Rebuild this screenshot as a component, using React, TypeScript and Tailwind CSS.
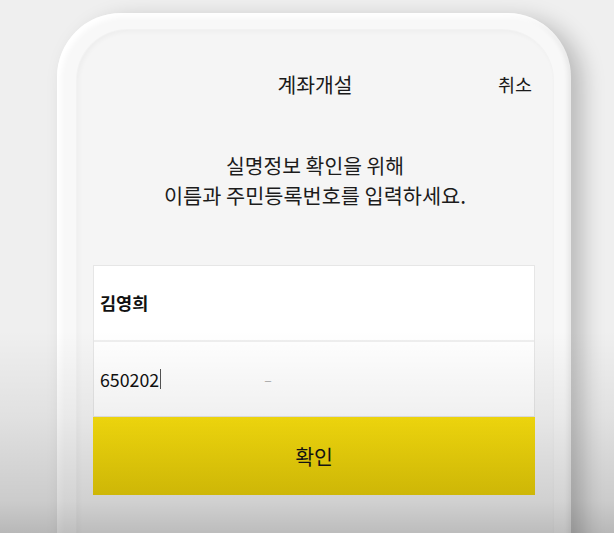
const font = { fontFamily: '"Noto Sans CJK KR", "Noto Sans", sans-serif' };

export default function App() {
  return (
    <div className="relative w-[614px] h-[533px] overflow-hidden bg-[#efefef]" style={font}>
      {/* phone body */}
      <div className="ml-[57px] mt-[13px] w-[514px] h-[600px] rounded-[64px] bg-[#f8f8f8] pt-[17px] pr-[18px] pl-[20px] shadow-[12px_6px_22px_rgba(0,0,0,0.22),inset_4px_4px_5px_rgba(255,255,255,1),inset_-3px_0_5px_rgba(0,0,0,0.07)]">
        {/* screen */}
        <div className="h-full rounded-[50px] bg-[#f5f5f5] shadow-[0_0_0_1px_rgba(0,0,0,0.025),inset_2px_2px_4px_rgba(0,0,0,0.03)]">
          <div className="grid grid-cols-[1fr_auto_1fr] items-center pt-[42px] h-[66px]">
            <div />
            <div className="text-[20.4px] leading-[24px] text-[#1a1a1a]">계좌개설</div>
            <div className="justify-self-end pr-[21px] text-[18.5px] leading-[24px] text-[#1a1a1a]">취소</div>
          </div>

          <div className="mt-[54px] text-center leading-[30px] text-[#1c1c1c]">
            <p className="text-[20.4px]">실명정보 확인을 위해</p>
            <p className="text-[20.8px]">이름과 주민등록번호를 입력하세요.</p>
          </div>

          <div className="mt-[55px] ml-[16px] w-[442px]">
            <div className="border border-[#e6e6e6] bg-white">
              <div className="h-[76px] flex items-center pl-[6px] border-b-2 border-[#efefef]">
                <span className="text-[17.5px] font-bold text-[#111]">김영희</span>
              </div>
              <div className="h-[74px] flex items-center pl-[6px]">
                <span className="text-[17.8px] text-[#111]">650202</span>
                <span className="ml-[1px] w-px h-[20px] bg-[#555]" />
                <span className="ml-[103px] text-[14px] text-[#b0b0b0]">–</span>
              </div>
            </div>
            <button className="w-full h-[78px] flex items-center justify-center bg-[linear-gradient(to_bottom,#fbe10e,#f0d508)] text-[20.5px] text-[#151515]">
              확인
            </button>
          </div>
        </div>
      </div>

      {/* lower shading */}
      <div className="pointer-events-none absolute inset-0 bg-[linear-gradient(to_bottom,rgba(0,0,0,0)_62%,rgba(0,0,0,0.06)_78%,rgba(0,0,0,0.15)_94%,rgba(0,0,0,0.23))]" />
    </div>
  );
}
